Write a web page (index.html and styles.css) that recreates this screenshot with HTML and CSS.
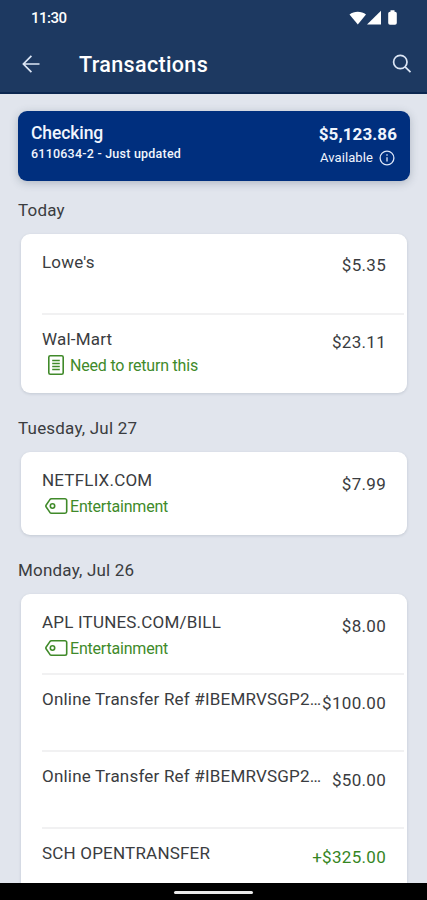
FILE: index.html
```html
<!DOCTYPE html>
<html lang="en">
<head>
<meta charset="utf-8">
<title>Transactions</title>
<link rel="stylesheet" href="styles.css">
</head>
<body>
<div class="phone">
  <header class="header">
    <div class="status">
      <span class="clock">11:30</span>
      <svg class="status-icons" width="49" height="16" viewBox="0 0 49 16">
        <path d="M.5 4.600C5 .9 12.500.9 17 4.600L8.800 14.500z"/>
        <path d="M18 14.500 32 .8v13.700z"/>
        <path d="M41.500 .3h4v1.500H46a1.800 1.800 0 0 1 1.800 1.800v9.300a1.800 1.800 0 0 1-1.800 1.800h-5a1.800 1.800 0 0 1-1.800-1.800V3.600a1.800 1.800 0 0 1 1.800-1.800h.5z"/>
      </svg>
    </div>
    <div class="appbar">
      <svg class="back" width="18" height="18" viewBox="0 0 18 18"><path d="M17.500 9H1.500M9.400 .9 1.400 9l8 8.100"/></svg>
      <h1 class="title">Transactions</h1>
      <svg class="search" width="20" height="20" viewBox="0 0 20 20"><circle cx="8.300" cy="8" r="6.700"/><path d="m13.100 12.900 5.400 5.300"/></svg>
    </div>
  </header>

  <main class="content">
    <section class="account">
      <div class="account-info">
        <div class="account-name">Checking</div>
        <div class="account-number">6110634-2 - Just updated</div>
      </div>
      <div class="account-balance">
        <div class="balance">$5,123.86</div>
        <div class="available"><span>Available</span>
          <svg width="16" height="16" viewBox="0 0 16 16"><circle cx="8" cy="8" r="6.900"/><path d="M8 7.200v4.300M8 4.300v1.500"/></svg>
        </div>
      </div>
    </section>

    <h2 class="day day-first">Today</h2>
    <section class="card card-today">
      <div class="row">
        <div class="details"><div class="name">Lowe's</div></div>
        <div class="amount">$5.35</div>
      </div>
      <div class="row">
        <div class="details">
          <div class="name">Wal-Mart</div>
          <div class="tag">
            <svg class="note-icon" width="16" height="20" viewBox="0 0 16 20"><rect x=".8" y=".8" width="14.400" height="18.400" rx="1.500"/><path d="M4.200 5.500h7.600M4.200 8.500h7.600M4.200 11.500h7.600M4.200 14.500h7.600"/></svg>
            <span>Need to return this</span>
          </div>
        </div>
        <div class="amount">$23.11</div>
      </div>
    </section>

    <h2 class="day">Tuesday, Jul 27</h2>
    <section class="card">
      <div class="row">
        <div class="details">
          <div class="name">NETFLIX.COM</div>
          <div class="tag">
            <svg class="tag-icon" width="23" height="16" viewBox="0 0 23 16"><path d="M6.500.8H20a1.700 1.700 0 0 1 1.700 1.700v11a1.700 1.700 0 0 1-1.700 1.700H6.500q-1 0-1.600-.8L1.200 9q-.7-1 0-2l3.700-5.400q.6-.8 1.600-.8z"/><circle cx="7.500" cy="8" r="2.200"/></svg>
            <span>Entertainment</span>
          </div>
        </div>
        <div class="amount">$7.99</div>
      </div>
    </section>

    <h2 class="day">Monday, Jul 26</h2>
    <section class="card">
      <div class="row">
        <div class="details">
          <div class="name">APL ITUNES.COM/BILL</div>
          <div class="tag">
            <svg class="tag-icon" width="23" height="16" viewBox="0 0 23 16"><path d="M6.500.8H20a1.700 1.700 0 0 1 1.700 1.700v11a1.700 1.700 0 0 1-1.700 1.700H6.500q-1 0-1.600-.8L1.200 9q-.7-1 0-2l3.700-5.400q.6-.8 1.600-.8z"/><circle cx="7.500" cy="8" r="2.200"/></svg>
            <span>Entertainment</span>
          </div>
        </div>
        <div class="amount">$8.00</div>
      </div>
      <div class="row">
        <div class="details"><div class="name">Online Transfer Ref #IBEMRVSGP2…</div></div>
        <div class="amount">$100.00</div>
      </div>
      <div class="row">
        <div class="details"><div class="name">Online Transfer Ref #IBEMRVSGP2…</div></div>
        <div class="amount">$50.00</div>
      </div>
      <div class="row">
        <div class="details"><div class="name">SCH OPENTRANSFER</div></div>
        <div class="amount credit">+$325.00</div>
      </div>
    </section>
  </main>

  <footer class="navbar"><div class="home"></div></footer>
</div>
</body>
</html>
```
FILE: styles.css
```css
* { box-sizing: border-box; }

body {
  margin: 0;
  font-family: Roboto, "Liberation Sans", sans-serif;
  color: #3a3c40;
}

h1, h2 { margin: 0; }
svg { display: block; flex: none; }

.phone {
  display: flex;
  flex-direction: column;
  width: 427px;
  height: 900px;
  overflow: hidden;
  background: #e1e5ed;
}

.header {
  flex: none;
  height: 94px;
  background: #1d3961;
  border-bottom: 2px solid #0b2750;
  color: #fff;
}

.status {
  display: flex;
  justify-content: space-between;
  height: 36px;
  padding: 10px 29px 0 31px;
}

.clock {
  font-size: 15px;
  font-weight: 500;
  line-height: 17px;
  letter-spacing: -0.5px;
}

.status-icons { fill: #fff; }

.appbar {
  display: flex;
  align-items: center;
  height: 56px;
  padding: 0 15px 0 22px;
}

.back, .search {
  fill: none;
  stroke: #dce6f5;
  stroke-width: 1.7;
}

.title {
  flex: 1;
  margin-left: 39px;
  padding-top: 2px;
  font-size: 21.5px;
  font-weight: 500;
  line-height: 26px;
  letter-spacing: 0.35px;
}

.content {
  flex: 1;
  min-height: 0;
  overflow: hidden;
  padding: 17px 17px 0 18px;
}

.account {
  display: flex;
  justify-content: space-between;
  height: 70px;
  padding: 12px 13px 0;
  border-radius: 9px;
  background: #002f7e;
  box-shadow: 0 2px 9px rgba(60, 75, 95, 0.3);
  color: #f1f5fd;
}

.account-name {
  font-size: 17.5px;
  font-weight: 500;
  line-height: 20px;
  letter-spacing: -0.1px;
}

.account-number {
  font-size: 12.5px;
  font-weight: 500;
  line-height: 22px;
  letter-spacing: 0.22px;
}

.balance {
  font-size: 17px;
  font-weight: 700;
  line-height: 22px;
  letter-spacing: 0.1px;
  text-align: right;
}

.available {
  display: flex;
  align-items: center;
  justify-content: flex-end;
  gap: 6px;
  padding-right: 2px;
  font-size: 13px;
  line-height: 26px;
  letter-spacing: 0.1px;
}

.available svg {
  fill: none;
  stroke: #dce6f8;
  stroke-width: 1.3;
}

.day {
  height: 59px;
  font-size: 17px;
  font-weight: 400;
  line-height: 70px;
  letter-spacing: 0.2px;
}

.day-first {
  height: 53px;
  line-height: 58px;
}

.card {
  margin: 0 3px;
  padding-top: 4px;
  border-radius: 9px;
  background: #fff;
  box-shadow: 0 1px 3px rgba(60, 75, 95, 0.18);
}

.row {
  display: flex;
  justify-content: space-between;
  height: 77px;
  margin: 0 3px 0 21px;
  padding: 14px 18px 0 0;
  border-bottom: 2px solid #f1f1f2;
}

.row:last-child {
  height: 79px;
  border-bottom: 0;
}

.name, .amount {
  font-size: 17px;
  line-height: 21px;
  letter-spacing: 0.2px;
  white-space: nowrap;
}

.details {
  flex: 1;
  min-width: 0;
}

.amount {
  flex: none;
  padding-top: 4px;
  letter-spacing: 0.3px;
}

.card-today .row:last-child { height: 78px; }
.card-today .amount { padding-top: 3px; }

.credit { color: #36861f; }

.tag {
  display: flex;
  align-items: center;
  height: 30px;
  color: #408a2a;
  font-size: 16px;
  letter-spacing: -0.2px;
}

.tag svg {
  fill: none;
  stroke: #408a2a;
  stroke-width: 1.6;
}

.note-icon { margin: 0 6px; }
.tag-icon { margin: 0 2px 0 3px; }

.navbar {
  display: flex;
  flex: none;
  justify-content: center;
  height: 17px;
  padding-top: 8px;
  background: #000;
}

.home {
  width: 79px;
  height: 3px;
  border-radius: 2px;
  background: #e9e9e9;
}
```
